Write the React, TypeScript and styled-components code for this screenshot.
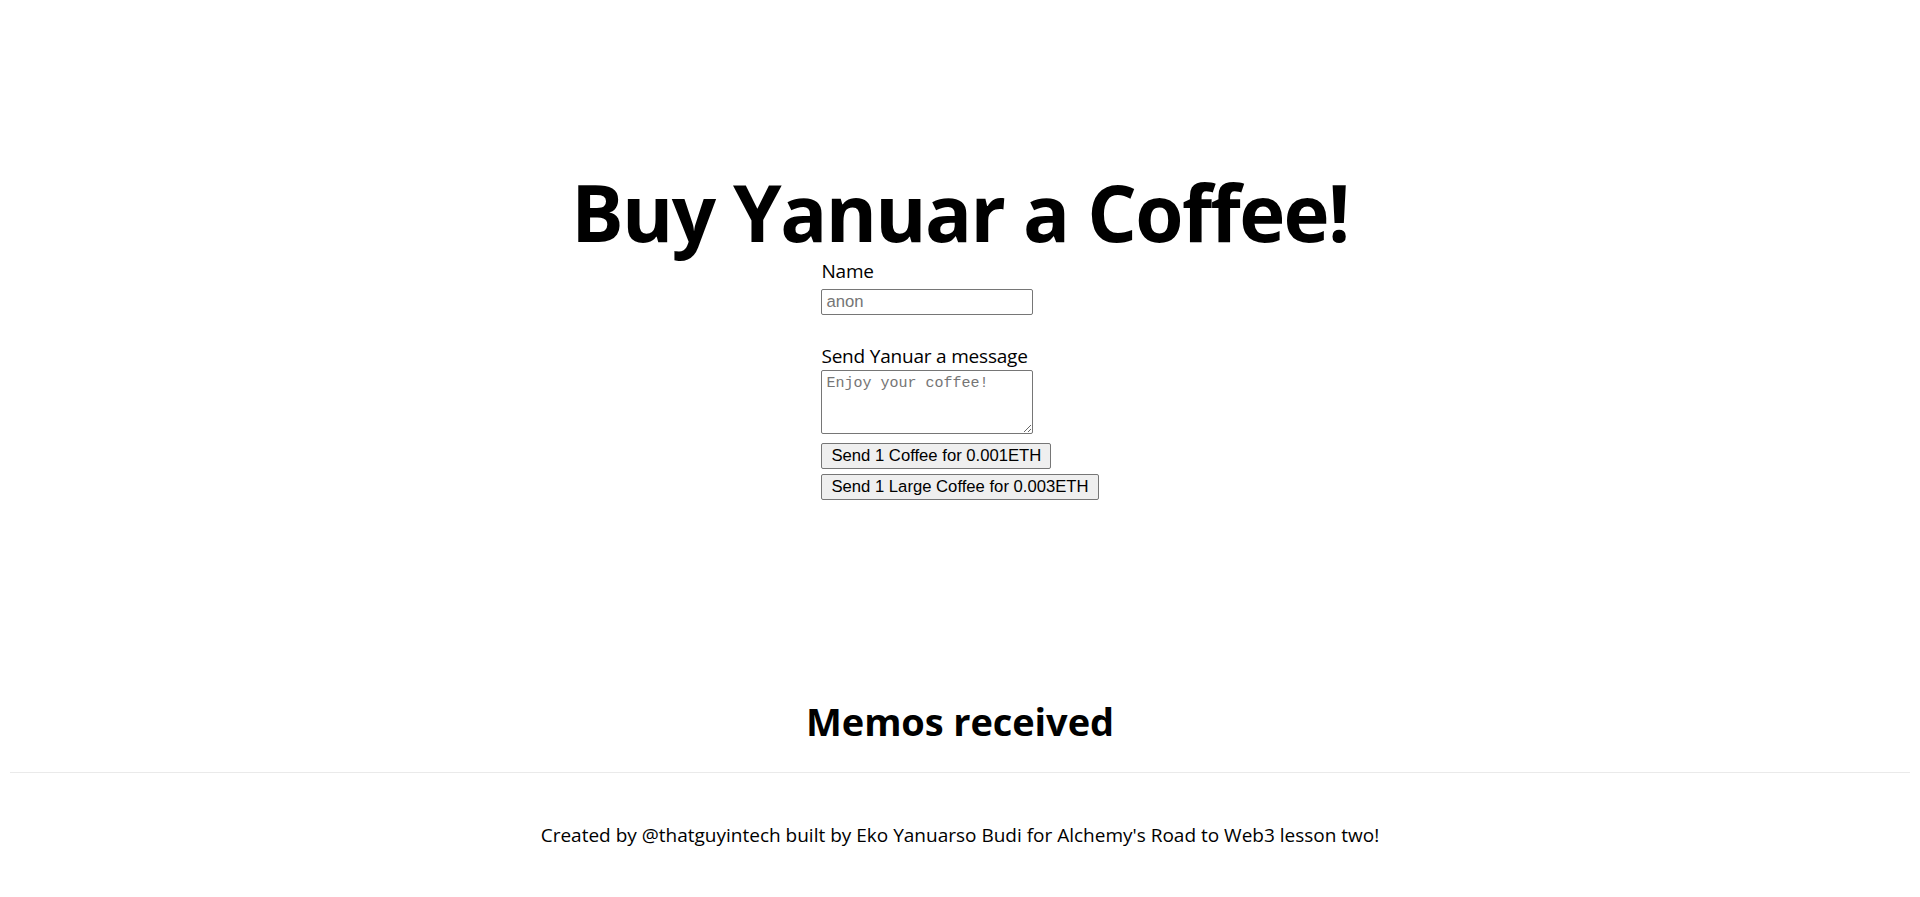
import React from "react";
import styled, { createGlobalStyle } from "styled-components";

const GlobalStyle = createGlobalStyle`
  html, body {
    margin: 0;
    padding: 0;
    background: #ffffff;
    color: #000000;
    font-family: "Open Sans", "Noto Sans", Arial, sans-serif;
  }
  * { box-sizing: border-box; }
`;

const Page = styled.div`
  padding: 0 10px;
`;

const Main = styled.main`
  display: flex;
  flex-direction: column;
  align-items: center;
  padding: 167px 0 0;
`;

const Title = styled.h1`
  margin: 0;
  font-size: 78px;
  line-height: 90px;
  font-weight: 700;
  letter-spacing: -1.6px;
  text-align: center;
`;

const Form = styled.form`
  display: flex;
  flex-direction: column;
  align-items: flex-start;
  margin-top: 1px;
`;

const Field = styled.div<{ $gap?: number }>`
  display: flex;
  flex-direction: column;
  align-items: flex-start;
  margin-top: ${(p) => p.$gap ?? 0}px;
`;

const Label = styled.label`
  font-size: 19px;
  letter-spacing: -0.2px;
  line-height: 27px;
  height: 27px;
`;

const TextInput = styled.input`
  display: block;
  margin: 4px 0 0;
  width: 212px;
  height: 26px;
  padding: 1px 4px;
  border: 1px solid #767676;
  border-radius: 2px;
  font-family: "Liberation Sans", Arial, sans-serif;
  font-size: 16.67px;
  color: #000;
  background: #fff;
  &::placeholder { color: #757575; }
`;

const TextArea = styled.textarea`
  display: block;
  margin: 0;
  width: 212px;
  height: 64px;
  padding: 3px 4px;
  border: 1px solid #767676;
  border-radius: 2px;
  font-family: "Liberation Mono", "DejaVu Sans Mono", monospace;
  font-size: 15px;
  line-height: 19px;
  color: #000;
  background: #fff;
  &::placeholder { color: #757575; }
`;

const Button = styled.button<{ $gap: number }>`
  display: block;
  margin: ${(p) => p.$gap}px 0 0;
  height: 26px;
  padding: 0 9px;
  border: 1px solid #767676;
  border-radius: 2px;
  background: #efefef;
  color: #000;
  font-family: "Liberation Sans", Arial, sans-serif;
  font-size: 16.67px;
  line-height: 24px;
  cursor: pointer;
`;

const MemosTitle = styled.h1`
  margin: 195px 0 0;
  font-size: 38px;
  line-height: 53px;
  font-weight: 700;
  letter-spacing: -0.1px;
  text-align: center;
`;

const Footer = styled.footer`
  display: flex;
  justify-content: center;
  align-items: center;
  margin-top: 24px;
  border-top: 1px solid #eaeaea;
  height: 125px;
  font-size: 19px;
  color: #000;
`;

const FooterLink = styled.a`
  color: inherit;
  text-decoration: none;
`;

export default function App() {
  return (
    <>
      <GlobalStyle />
      <Page>
        <Main>
          <Title>Buy Yanuar a Coffee!</Title>
          <Form onSubmit={(e) => e.preventDefault()}>
            <Field>
              <Label htmlFor="name">Name</Label>
              <TextInput id="name" type="text" placeholder="anon" />
            </Field>
            <Field $gap={28}>
              <Label htmlFor="message">Send Yanuar a message</Label>
              <TextArea id="message" rows={3} placeholder="Enjoy your coffee!" />
            </Field>
            <Button type="button" $gap={9}>
              Send 1 Coffee for 0.001ETH
            </Button>
            <Button type="button" $gap={5}>
              Send 1 Large Coffee for 0.003ETH
            </Button>
          </Form>
        </Main>
        <MemosTitle>Memos received</MemosTitle>
        <Footer>
          <FooterLink href="#">
            Created by @thatguyintech built by Eko Yanuarso Budi for Alchemy's Road to Web3 lesson two!
          </FooterLink>
        </Footer>
      </Page>
    </>
  );
}
